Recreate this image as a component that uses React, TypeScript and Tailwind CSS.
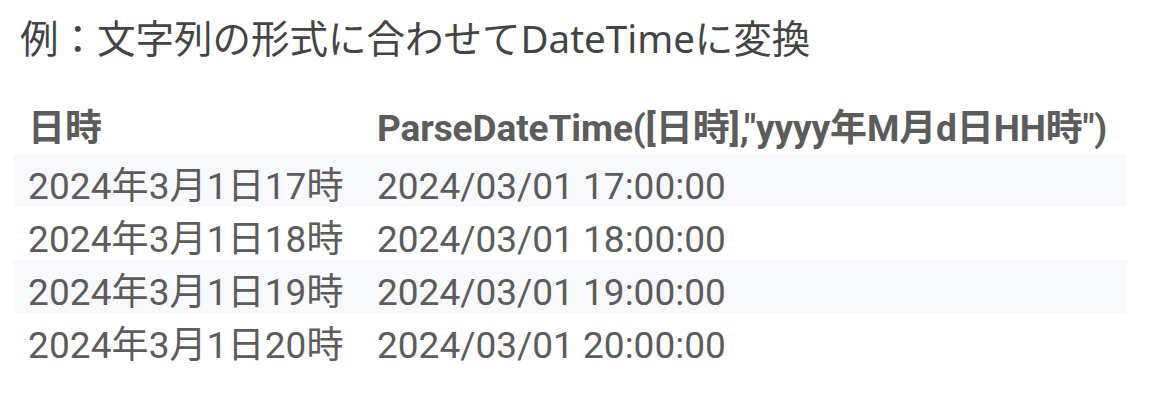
const rows = [
  ["2024年3月1日17時", "2024/03/01 17:00:00"],
  ["2024年3月1日18時", "2024/03/01 18:00:00"],
  ["2024年3月1日19時", "2024/03/01 19:00:00"],
  ["2024年3月1日20時", "2024/03/01 20:00:00"],
];

const App = () => {
  return (
    <div className="w-[1171px] h-[416px] bg-white overflow-hidden">
      <h1 className="pl-[20px] pt-[12px] text-[38.5px] leading-[52px] text-[#444444] font-['Noto_Sans','Noto_Sans_CJK_JP',sans-serif]">
        例：文字列の形式に合わせてDateTimeに変換
      </h1>

      <div className="ml-[13px] mt-[37px] w-[1114px] text-[#5c5c5c] font-['Roboto','Noto_Sans_CJK_JP',sans-serif] text-[37px]">
        <div className="grid grid-cols-[349px_1fr] h-[53px] items-center pb-[14px] font-bold tracking-[-0.1px]">
          <div className="pl-[15px]">日時</div>
          <div className="pl-[15px] whitespace-nowrap">
            ParseDateTime([日時],"yyyy年M月d日HH時")
          </div>
        </div>
        {rows.map((r, i) => (
          <div
            key={i}
            className={
              "grid grid-cols-[349px_1fr] h-[53px] items-center pt-[5px] " +
              (i % 2 === 0 ? "bg-[#f7f9fd]" : "bg-white")
            }
          >
            <div className="pl-[15px] whitespace-nowrap tracking-[0.1px]">{r[0]}</div>
            <div className="pl-[15px] whitespace-nowrap">{r[1]}</div>
          </div>
        ))}
      </div>
    </div>
  );
};

export default App;
